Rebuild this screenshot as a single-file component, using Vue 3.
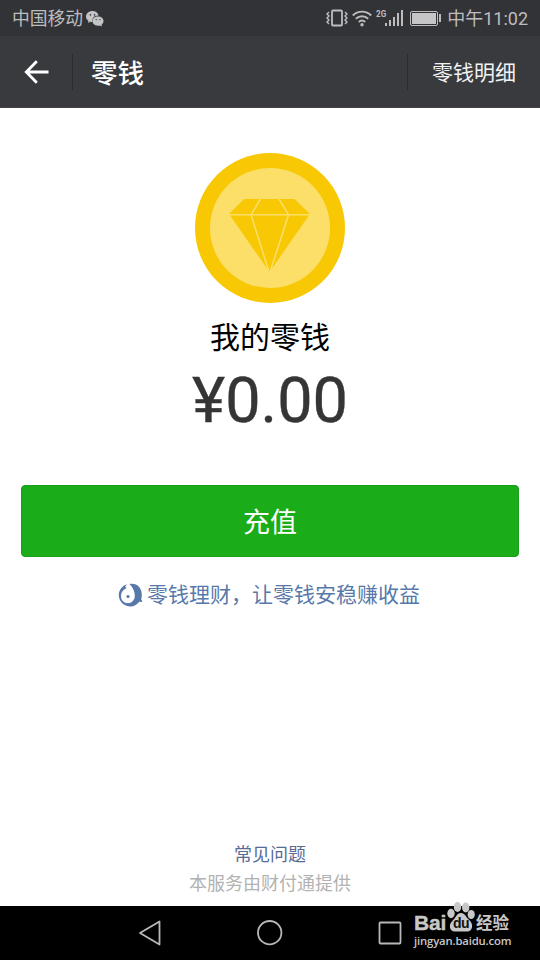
<script setup>
const signalBars = [3, 6, 9, 13, 16]
</script>

<template>
  <main class="screen">
    <div class="status">
      <span class="carrier">中国移动</span>
      <svg class="wechat" width="18" height="16" viewBox="0 0 18 16">
        <path fill="#c4c4c6" d="M6.500 0C2.800 0 0 2.500 0 5.600c0 1.800 1 3.300 2.500 4.300L2 12l2.400-1.300c.8.2 1.300.3 2.100.3C5.600 7.400 8.400 4.500 12.600 4.600 12 2 9.700 0 6.500 0z" />
        <path fill="#c4c4c6" d="M12 5.400c-3.300 0-5.500 2-5.500 4.600s2.200 4.700 5.500 4.700c.8 0 1.400-.1 2-.3l2 1-.4-1.800c1.300-.9 1.900-2.100 1.900-3.600 0-2.600-2.200-4.600-5.500-4.600z" />
        <g fill="#343538"><circle cx="4.400" cy="3.900" r=".8" /><circle cx="8.600" cy="3.900" r=".8" /><circle cx="10.200" cy="8.600" r=".7" /><circle cx="14" cy="8.600" r=".7" /></g>
      </svg>
      <div class="indicators">
        <svg width="22" height="18" viewBox="0 0 22 18" fill="none" stroke="#bdbdbf">
          <rect x="6" y="1.500" width="10" height="15" rx="1" stroke-width="1.800" />
          <path stroke-width="1.400" d="M3 3l-2 2 2 2-2 2 2 2-2 2 2 2M19 3l2 2-2 2 2 2-2 2 2 2-2 2" />
        </svg>
        <svg class="wifi" width="20" height="17" viewBox="0 0 20 17" fill="none" stroke="#bdbdbf" stroke-width="1.900">
          <path d="M.8 5.500c5.200-5.200 13.200-5.200 18.400 0M3.800 8.800c3.600-3.500 8.800-3.500 12.400 0M6.800 12c1.900-1.800 4.500-1.800 6.400 0" />
          <circle cx="10" cy="14.800" r="1.700" fill="#bdbdbf" stroke="none" />
        </svg>
        <span class="network">2G</span>
        <div class="signal"><i v-for="h in signalBars" :key="h" :style="{ height: h + 'px' }"></i></div>
        <div class="battery"><i></i></div>
        <i class="terminal"></i>
        <span class="clock">中午11:02</span>
      </div>
    </div>
    <header class="bar">
      <div class="back">
        <svg width="26" height="24" viewBox="0 0 26 24" fill="none" stroke="#fff" stroke-width="2.800"><path d="M12.800 1.300L2.300 12l10.500 10.700M2.500 12h22" /></svg>
      </div>
      <h1>零钱</h1>
      <div class="detail">零钱明细</div>
    </header>
    <section class="content">
      <svg class="coin" width="150" height="150" viewBox="0 0 150 150">
        <circle cx="75" cy="75" r="75" fill="#f8c805" />
        <circle cx="75" cy="75" r="60" fill="#fbdf68" />
        <path fill="#f8c805" d="M49 46h50.500L115 61 74.500 119 34 61z" />
        <path fill="none" stroke="#fbdf68" stroke-width="1.500" d="M34 61.800h81M65.500 46l-9.500 15.800L74 119M84 46l9.500 15.800L75 119" />
      </svg>
      <h2>我的零钱</h2>
      <div class="amount">¥0.00</div>
      <button class="topup">充值</button>
      <div class="invest">
        <svg width="25" height="24" viewBox="0 0 25 24" fill="#5878aa">
          <path d="M11.500 1C18.500-.5 23.800 4.500 23.800 11.500c0 2.200-.2 3.500-.6 4.500l1.200 2.900-3.100-.2C18.800 21.800 16 23.500 12.500 23.500 6 23.500 .8 18.500 .8 12 .8 7 4.300 2.800 9 1.300L7.200 3.700 8.600 4.900C5 6.500 3 9.500 3 13c0 4.300 3 7.200 6.900 7.200s6.900-3.200 6.900-7.200c0-4.500-1.700-8.400-5.300-12z" />
          <circle cx="10" cy="13.500" r="1.600" />
        </svg>
        <span>零钱理财，让零钱安稳赚收益</span>
      </div>
      <footer>
        <div class="faq">常见问题</div>
        <div class="provider">本服务由财付通提供</div>
      </footer>
    </section>
    <nav class="nav">
      <svg width="24" height="26" viewBox="0 0 24 26"><path d="M21.500 1.500v23L2 13z" /></svg>
      <svg width="26" height="26" viewBox="0 0 26 26"><circle cx="12.700" cy="12.700" r="11.700" /></svg>
      <svg width="24" height="24" viewBox="0 0 24 24"><rect x="1.500" y="1.500" width="21" height="21" rx="1" /></svg>
    </nav>
    <div class="watermark">
      <div class="brand">
        <span class="bai">Bai</span>
        <span class="paw">
          <svg width="28" height="30" viewBox="0 0 28 30" fill="#c8c8c8">
            <ellipse cx="4" cy="11.500" rx="3.700" ry="4.700" /><ellipse cx="10.500" cy="5" rx="3.700" ry="4.900" />
            <ellipse cx="18.700" cy="5.500" rx="3.700" ry="4.900" /><ellipse cx="24.200" cy="12.500" rx="3.600" ry="4.600" />
            <path d="M14 11c4 0 5 4.500 8.500 7.200 4 3.300 3.700 11.300-2.500 11.300H8C2 29.500 1.500 22 5.500 18.700 9 16 9.500 11 14 11z" />
          </svg>
          <b>du</b>
        </span>
        <span class="jingyan">经验</span>
      </div>
      <div class="url">jingyan.baidu.com</div>
    </div>
  </main>
</template>

<style>
body { margin: 0; }
</style>

<style scoped>
.screen { position: relative; width: 540px; height: 960px; display: flex; flex-direction: column; overflow: hidden; background: #fff; font-family: Roboto, "Noto Sans CJK SC", sans-serif; }
.status { height: 36px; box-sizing: border-box; padding: 1px 12px 0; display: flex; align-items: center; background: #323336; color: #bdbdbf; font-size: 18px; line-height: 35px; }
.carrier { width: 74px; font-size: 17.800px; }
.indicators { margin-left: auto; display: flex; align-items: center; }
.indicators svg { margin-top: -1px; }
.indicators .wifi { margin-left: 4px; }
.network { margin-left: 4px; align-self: flex-start; margin-top: 7px; font-size: 9.500px; line-height: 11px; font-weight: 700; width: 9px; transform: scaleX(.85); transform-origin: left; }
.signal { display: flex; align-items: flex-end; gap: 1.500px; height: 16px; margin-top: -1px; }
.signal i { width: 2.500px; background: #bdbdbf; }
.battery { box-sizing: border-box; width: 28px; height: 15px; margin: -1px 0 0 7px; padding: 1px; border: 1px solid #bdbdbf; border-radius: 2px; }
.battery i { display: block; height: 100%; background: #c5c5c7; }
.terminal { width: 2px; height: 8px; margin: -1px 6px 0 1px; background: #bdbdbf; }
.clock { font-size: 18px; white-space: nowrap; }
.bar { height: 72px; box-sizing: border-box; display: flex; align-items: center; background: #393a3e; border-bottom: 1px solid #44444b; color: #fff; }
.back { width: 73px; height: 36px; box-sizing: border-box; padding-left: 24px; display: flex; align-items: center; border-right: 1px solid #2b2c2f; }
h1 { margin: 5px 0 0 18px; font-size: 26.500px; line-height: 36px; font-weight: 500; }
.detail { margin-left: auto; height: 36px; width: 133px; box-sizing: border-box; padding-left: 24px; border-left: 1px solid #2b2c2f; font-size: 21px; line-height: 39px; color: #f2f2f2; }
.content { height: 798px; display: flex; flex-direction: column; align-items: center; }
.coin { margin-top: 45px; flex: none; }
h2 { margin: 14px 0 0; font-size: 30px; line-height: 42px; font-weight: 400; color: #000; }
.amount { margin-top: 4px; height: 76px; font-size: 63px; line-height: 76px; color: #353535; -webkit-text-stroke: .4px #353535; }
.topup { width: 498px; height: 72px; margin-top: 46px; padding: 4px 0 0; flex: none; border: 1px solid #189e18; border-radius: 4px; background: #1aad19; color: #fff; font: 27px/66px Roboto, "Noto Sans CJK SC", sans-serif; }
.invest { margin-top: 23px; height: 30px; padding-right: 2px; display: flex; align-items: center; gap: 4px; color: #5878aa; font-size: 21px; line-height: 30px; white-space: nowrap; }
footer { margin-top: auto; padding-bottom: 8px; text-align: center; font-size: 18px; line-height: 29px; }
.faq { color: #576b95; }
.provider { color: #b2b2b2; }
.nav { height: 54px; box-sizing: border-box; padding: 0 138px; display: flex; align-items: center; justify-content: space-between; background: #000; }
.nav svg { fill: none; stroke: #b8b8b8; stroke-width: 1.800; stroke-linejoin: round; }
.watermark { position: absolute; left: 414px; top: 902px; width: 98px; color: #c8c8c8; }
.brand { height: 31px; display: flex; align-items: flex-end; }
.bai { width: 33px; font: 700 21px/20px "Liberation Sans", sans-serif; letter-spacing: -.2px; -webkit-text-stroke: .4px #c8c8c8; }
.paw { position: relative; width: 28px; height: 31px; }
.paw b { position: absolute; left: 6px; top: 14px; color: #111; font: 700 14px/14px "Liberation Sans", sans-serif; letter-spacing: -.5px; }
.jingyan { margin-left: 1px; font-size: 16.500px; line-height: 18px; font-weight: 700; white-space: nowrap; }
.url { font-family: "Open Sans", sans-serif; font-size: 11.300px; line-height: 15px; font-weight: 600; white-space: nowrap; letter-spacing: -.15px; }
</style>
